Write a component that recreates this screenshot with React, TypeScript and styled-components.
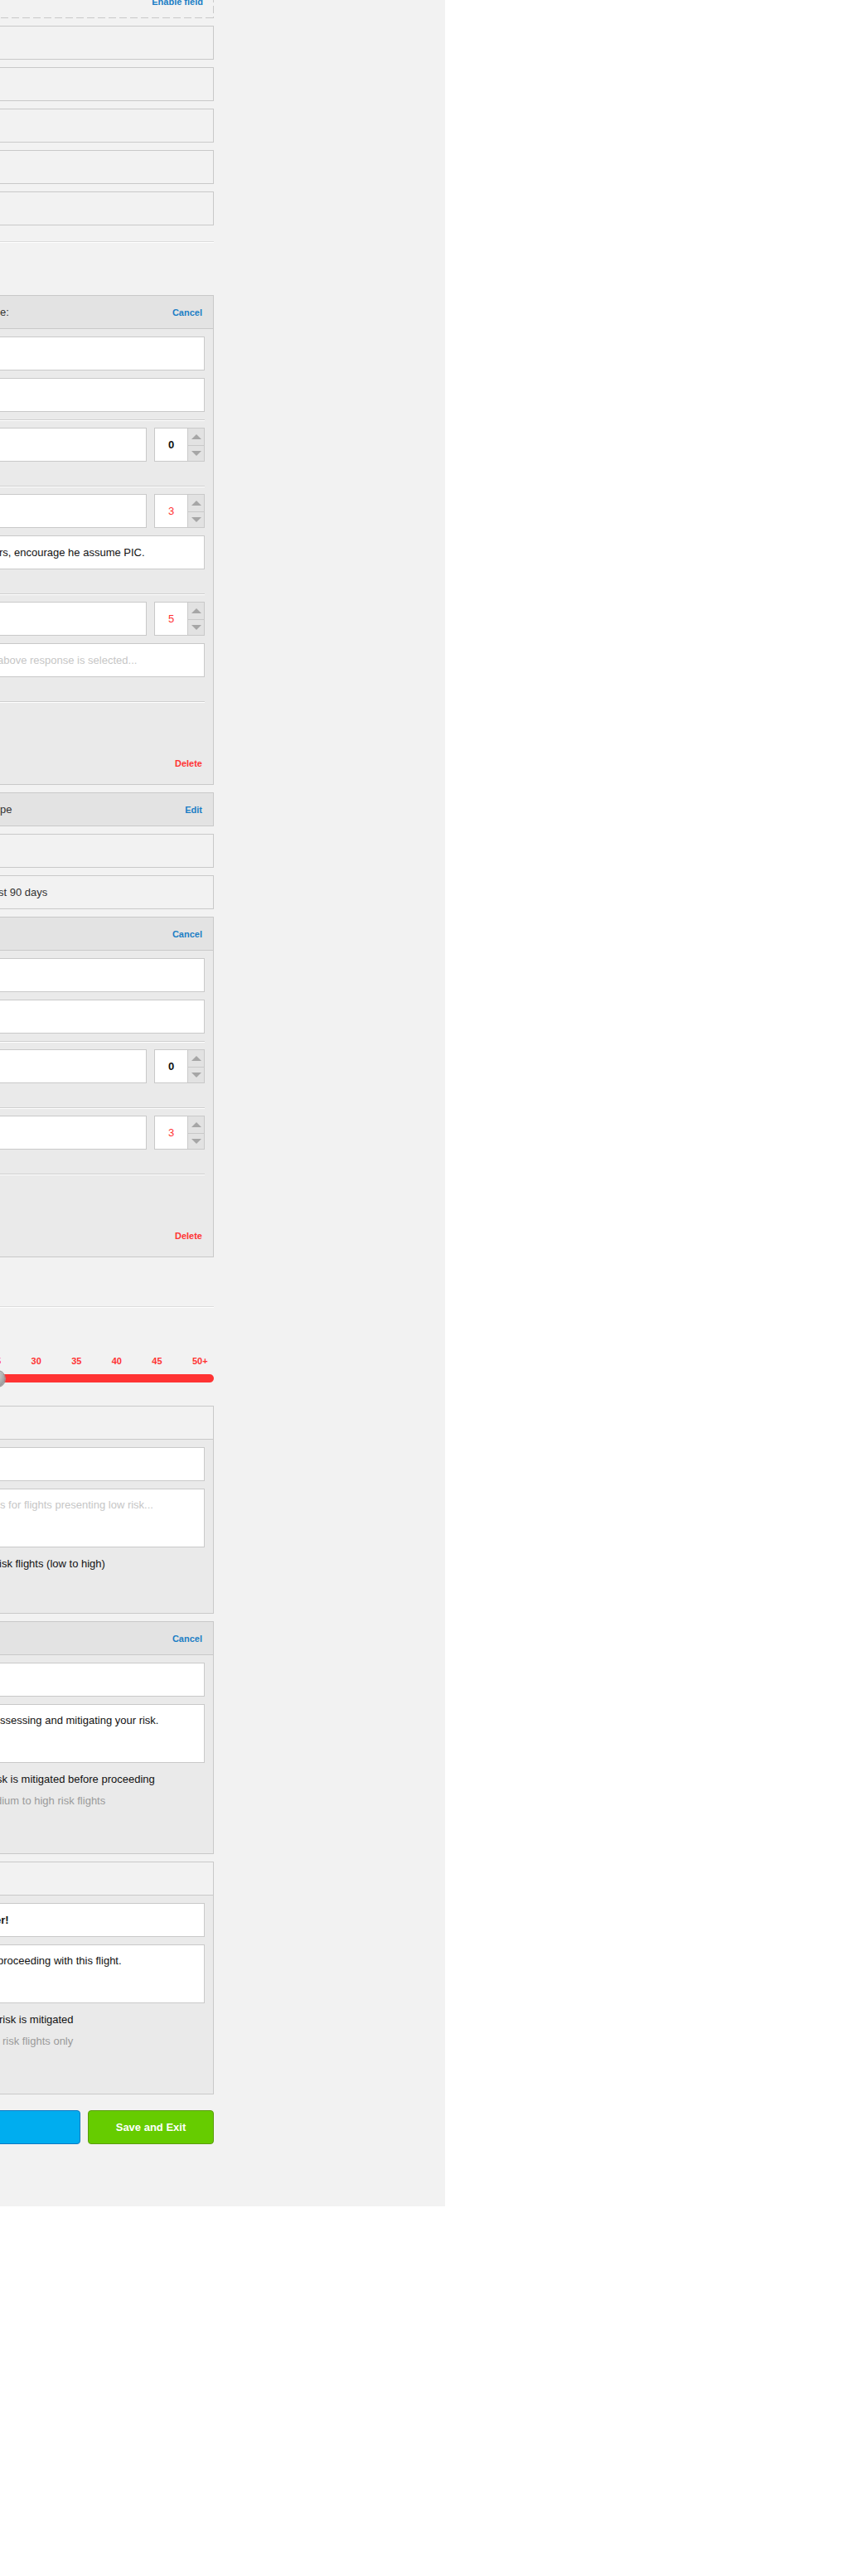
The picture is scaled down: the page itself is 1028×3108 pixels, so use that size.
import React from 'react';
import styled, { createGlobalStyle } from 'styled-components';

const LINE = '#c9c9c9';
const BLUE = '#1b7ec5';
const RED = '#ff3333';

const GlobalStyle = createGlobalStyle`
  html, body { margin: 0; padding: 0; background: #ffffff; }
  body { font-family: "Liberation Sans", Arial, sans-serif; }
  * { box-sizing: border-box; }
`;

const Page = styled.div`
  width: 537px;
  height: 2662px;
  background: #f2f2f2;
  overflow: hidden;
`;

// the form column is wider than the visible area, its left side is scrolled out
const Column = styled.div`
  width: 270px;
  margin-left: -12px;
  display: flex;
  flex-direction: column;
`;

const DisabledField = styled.div`
  height: 41px;
  margin-top: -19px;
  display: flex;
  align-items: center;
  justify-content: flex-end;
  padding-right: 13px;
  background:
    repeating-linear-gradient(90deg, ${LINE} 0 9px, transparent 9px 13px) left bottom / 100% 1px no-repeat,
    repeating-linear-gradient(180deg, ${LINE} 0 9px, transparent 9px 13px) right top / 1px 100% no-repeat;
`;

const TextLink = styled.span<{ $color?: string }>`
  font-size: 11px;
  font-weight: bold;
  line-height: 14px;
  color: ${p => p.$color || BLUE};
  white-space: nowrap;
`;

const FieldBox = styled.div`
  margin-top: 9px;
  height: 41px;
  border: 1px solid ${LINE};
  display: flex;
  align-items: center;
  padding-left: 11px;
  font-size: 13px;
  color: #333;
  white-space: nowrap;
  overflow: hidden;
`;

const Rule = styled.hr<{ $gap: number }>`
  margin: ${p => p.$gap}px 0 0;
  height: 2px;
  border: 0;
  border-top: 1px solid #dcdcdc;
  border-bottom: 1px solid #ffffff;
`;

const Panel = styled.div<{ $gap: number }>`
  margin-top: ${p => p.$gap}px;
  border: 1px solid ${LINE};
  background: #eaeaea;
`;

const PanelHeader = styled.div<{ $light?: boolean }>`
  height: 40px;
  border-bottom: 1px solid ${LINE};
  background: ${p => (p.$light ? '#f2f2f2' : '#e3e3e3')};
  display: flex;
  align-items: center;
  justify-content: space-between;
  padding: 0 13px 0 11px;
  font-size: 13px;
  color: #333;
  white-space: nowrap;
  overflow: hidden;
  &:last-child {
    height: 39px;
    border-bottom: none;
  }
`;

const PanelBody = styled.div`
  padding: 9px 10px 0;
`;

const Fields = styled.div`
  display: flex;
  flex-direction: column;
  gap: 9px;
`;

const Input = styled.div<{ $tall?: boolean }>`
  height: ${p => (p.$tall ? 71 : 41)}px;
  background: #ffffff;
  border: 1px solid ${LINE};
  display: flex;
  align-items: ${p => (p.$tall ? 'flex-start' : 'center')};
  padding-top: ${p => (p.$tall ? 10 : 0)}px;
  line-height: 18px;
  font-size: 13px;
  color: #111;
  white-space: nowrap;
  overflow: hidden;
`;

const Frag = styled.span<{ $shift?: number; $muted?: boolean; $bold?: boolean }>`
  margin-left: ${p => p.$shift || 0}px;
  color: ${p => (p.$muted ? '#c6c6c6' : 'inherit')};
  font-weight: ${p => (p.$bold ? 'bold' : 'normal')};
  white-space: nowrap;
`;

const AnswerBlock = styled.div`
  margin-top: 9px;
  border-top: 1px solid #cfcfcf;
  box-shadow: inset 0 1px 0 #ffffff;
  padding: 9px 0 20px;
  display: flex;
  flex-direction: column;
  gap: 9px;
`;

const AnswerRow = styled.div`
  display: grid;
  grid-template-columns: 1fr 61px;
  gap: 9px;
`;

const Spinner = styled.div`
  height: 41px;
  display: grid;
  grid-template-columns: 1fr 20px;
  border: 1px solid ${LINE};
  background: #ffffff;
`;

const SpinValue = styled.div<{ $red?: boolean }>`
  display: flex;
  align-items: center;
  justify-content: center;
  font-size: 13px;
  font-weight: ${p => (p.$red ? 'normal' : 'bold')};
  color: ${p => (p.$red ? RED : '#111')};
`;

const SpinArrows = styled.div`
  display: grid;
  grid-template-rows: 1fr 1fr;
  border-left: 1px solid ${LINE};
  background: #e2e2e2;
`;

const Arrow = styled.div<{ $dir: 'up' | 'down' }>`
  display: flex;
  align-items: center;
  justify-content: center;
  & + & {
    border-top: 1px solid ${LINE};
  }
  &::after {
    content: '';
    border-left: 6.5px solid transparent;
    border-right: 6.5px solid transparent;
    ${p => (p.$dir === 'up' ? 'border-bottom' : 'border-top')}: 6px solid #a6a6a6;
  }
`;

const PanelFooter = styled.div`
  margin-top: 9px;
  height: 100px;
  border-top: 1px solid #cfcfcf;
  box-shadow: inset 0 1px 0 #ffffff;
  display: flex;
  align-items: flex-end;
  justify-content: flex-end;
  padding: 0 3px 18px 0;
`;

const Options = styled.div`
  padding: 12px 0 51px;
`;

const OptionLine = styled.div`
  font-size: 13px;
  line-height: 16px;
  color: #111;
  white-space: nowrap;
`;

const Hint = styled(OptionLine)`
  color: #9a9a9a;
  margin: 10px 0 4px;
`;

const ScaleLabels = styled.div`
  display: flex;
  margin: 58px 0 0 -242px;
  font-size: 11px;
  font-weight: bold;
  line-height: 12px;
  color: ${RED};
`;

const ScaleLabel = styled.span`
  flex: 0 0 48.6px;
`;

const Track = styled.div`
  position: relative;
  margin-top: 10px;
  height: 10px;
  border-radius: 5px;
  background: ${RED};
`;

const Thumb = styled.div`
  position: absolute;
  left: -1px;
  top: -4.5px;
  width: 19px;
  height: 19px;
  border-radius: 50%;
  background: radial-gradient(circle at 35% 30%, #e4e4e4, #9b9b9b 75%);
  box-shadow: 0 0 0 1px #9a9a9a;
`;

const ButtonRow = styled.div`
  margin: 19px 0 0 -260px;
  display: flex;
  gap: 9px;
`;

const Button = styled.button<{ $variant: 'blue' | 'green' }>`
  height: 41px;
  flex: ${p => (p.$variant === 'blue' ? '1 1 auto' : '0 0 152px')};
  border-radius: 4px;
  border: 1px solid ${p => (p.$variant === 'blue' ? '#0a79c3' : '#5c9e0c')};
  background: ${p => (p.$variant === 'blue' ? '#00adef' : '#66cc00')};
  color: #ffffff;
  font-family: "Liberation Sans", Arial, sans-serif;
  font-size: 13px;
  font-weight: bold;
  cursor: pointer;
`;

function Answer({ value, red, note, noteShift, placeholder }: {
  value: string; red?: boolean; note?: string; noteShift?: number; placeholder?: boolean;
}) {
  return (
    <AnswerBlock>
      <AnswerRow>
        <Input />
        <Spinner>
          <SpinValue $red={red}>{value}</SpinValue>
          <SpinArrows>
            <Arrow $dir="up" />
            <Arrow $dir="down" />
          </SpinArrows>
        </Spinner>
      </AnswerRow>
      {note !== undefined && (
        <Input>
          <Frag $shift={noteShift} $muted={placeholder}>{note}</Frag>
        </Input>
      )}
    </AnswerBlock>
  );
}

const scale = ['0', '5', '10', '15', '20', '25', '30', '35', '40', '45', '50+'];

export default function App() {
  return (
    <>
      <GlobalStyle />
      <Page>
        <Column>
          <DisabledField>
            <TextLink>Enable field</TextLink>
          </DisabledField>
          <FieldBox />
          <FieldBox />
          <FieldBox />
          <FieldBox />
          <FieldBox />

          <Rule $gap={19} />

          <Panel $gap={63}>
            <PanelHeader>
              <Frag>e:</Frag>
              <TextLink>Cancel</TextLink>
            </PanelHeader>
            <PanelBody>
              <Fields>
                <Input />
                <Input />
              </Fields>
              <Answer value="0" />
              <Answer value="3" red note="rs, encourage he assume PIC." noteShift={-1} />
              <Answer value="5" red note="above response is selected..." noteShift={-3} placeholder />
              <PanelFooter>
                <TextLink $color={RED}>Delete</TextLink>
              </PanelFooter>
            </PanelBody>
          </Panel>

          <Panel $gap={9}>
            <PanelHeader>
              <Frag>pe</Frag>
              <TextLink>Edit</TextLink>
            </PanelHeader>
          </Panel>
          <FieldBox />
          <FieldBox>
            <Frag $shift={-2}>st 90 days</Frag>
          </FieldBox>

          <Panel $gap={9}>
            <PanelHeader>
              <span />
              <TextLink>Cancel</TextLink>
            </PanelHeader>
            <PanelBody>
              <Fields>
                <Input />
                <Input />
              </Fields>
              <Answer value="0" />
              <Answer value="3" red />
              <PanelFooter>
                <TextLink $color={RED}>Delete</TextLink>
              </PanelFooter>
            </PanelBody>
          </Panel>

          <Rule $gap={59} />

          <ScaleLabels>
            {scale.map(s => (
              <ScaleLabel key={s}>{s}</ScaleLabel>
            ))}
          </ScaleLabels>
          <Track>
            <Thumb />
          </Track>

          <Panel $gap={28}>
            <PanelHeader $light />
            <PanelBody>
              <Fields>
                <Input />
                <Input $tall>
                  <Frag $muted>s for flights presenting low risk...</Frag>
                </Input>
              </Fields>
              <Options>
                <OptionLine>isk flights (low to high)</OptionLine>
              </Options>
            </PanelBody>
          </Panel>

          <Panel $gap={9}>
            <PanelHeader>
              <span />
              <TextLink>Cancel</TextLink>
            </PanelHeader>
            <PanelBody>
              <Fields>
                <Input />
                <Input $tall>
                  <Frag>ssessing and mitigating your risk.</Frag>
                </Input>
              </Fields>
              <Options>
                <OptionLine>
                  <Frag $shift={-3}>sk is mitigated before proceeding</Frag>
                </OptionLine>
                <Hint>
                  <Frag $shift={-4}>dium to high risk flights</Frag>
                </Hint>
              </Options>
            </PanelBody>
          </Panel>

          <Panel $gap={9}>
            <PanelHeader $light />
            <PanelBody>
              <Fields>
                <Input>
                  <Frag $shift={-6} $bold>er!</Frag>
                </Input>
                <Input $tall>
                  <Frag $shift={-3}>proceeding with this flight.</Frag>
                </Input>
              </Fields>
              <Options>
                <OptionLine>risk is mitigated</OptionLine>
                <Hint>
                  <Frag $shift={4}>risk flights only</Frag>
                </Hint>
              </Options>
            </PanelBody>
          </Panel>

          <ButtonRow>
            <Button $variant="blue">Save and Continue</Button>
            <Button $variant="green">Save and Exit</Button>
          </ButtonRow>
        </Column>
      </Page>
    </>
  );
}
